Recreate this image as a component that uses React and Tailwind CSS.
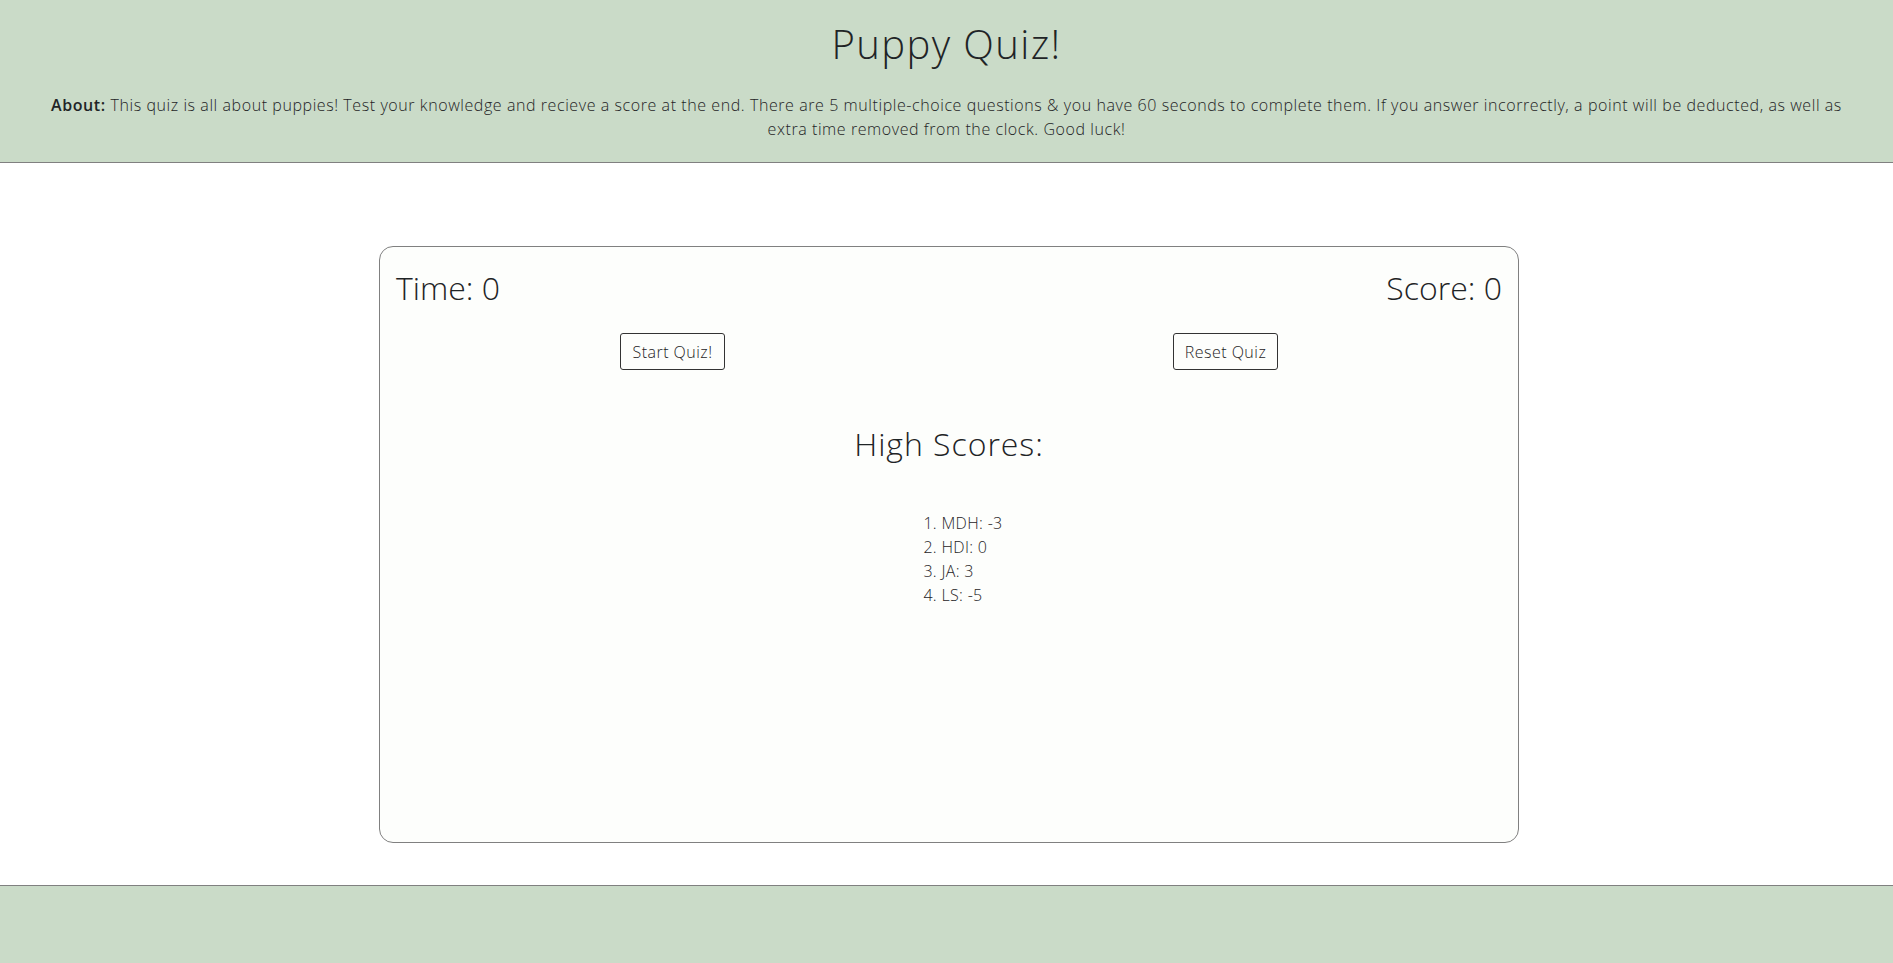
const scores = [
  { initials: "MDH", score: -3 },
  { initials: "HDI", score: 0 },
  { initials: "JA", score: 3 },
  { initials: "LS", score: -5 },
];

const App = () => {
  return (
    <div className="min-h-screen flex flex-col bg-white text-[#1f2426] font-['Open_Sans',sans-serif] font-light">
      <header className="bg-[#cadbc8] border-b border-[#808080] px-10 pt-[20px] pb-[21px] text-center">
        <h1 className="text-[40px] leading-[48px] tracking-[0.035em] mb-[25px]">Puppy Quiz!</h1>
        <p className="text-base leading-6 tracking-[0.036em]">
          <span className="font-semibold">About:</span> This quiz is all about puppies! Test your knowledge and recieve a
          score at the end. There are 5 multiple-choice questions &amp; you have 60 seconds to complete them. If you
          answer incorrectly, a point will be deducted, as well as extra time removed from the clock. Good luck!
        </p>
      </header>

      <main className="flex-1 pt-[83px] pb-[42px] pl-[5px]">
        <div className="w-[1140px] h-[597px] mx-auto border border-[#808080] rounded-[14px] bg-[#fdfefc] px-4 pt-[17px]">
          <div className="flex justify-between items-center text-[32px] leading-[48px]">
            <span>Time: 0</span>
            <span>Score: 0</span>
          </div>

          <div className="grid grid-cols-2 mt-[21px]">
            <div className="flex justify-center">
              <button className="border border-[#333] rounded-[3px] h-[37px] px-[11px] text-base tracking-[0.03em] bg-transparent">
                Start Quiz!
              </button>
            </div>
            <div className="flex justify-center">
              <button className="border border-[#333] rounded-[3px] h-[37px] px-[11px] text-base tracking-[0.03em] bg-transparent">
                Reset Quiz
              </button>
            </div>
          </div>

          <h2 className="text-center text-[32px] leading-[48px] tracking-[0.03em] mt-[50px]">High Scores:</h2>

          <div className="flex justify-center mt-[43px] pl-[6px]">
            <ol className="list-decimal pl-10 text-base leading-6 tracking-[0.02em] text-left">
              {scores.map((s) => (
                <li key={s.initials}>
                  {s.initials}: {s.score}
                </li>
              ))}
            </ol>
          </div>
        </div>
      </main>

      <footer className="bg-[#cadbc8] border-t border-[#808080] h-[78px]" />
    </div>
  );
};

export default App;
